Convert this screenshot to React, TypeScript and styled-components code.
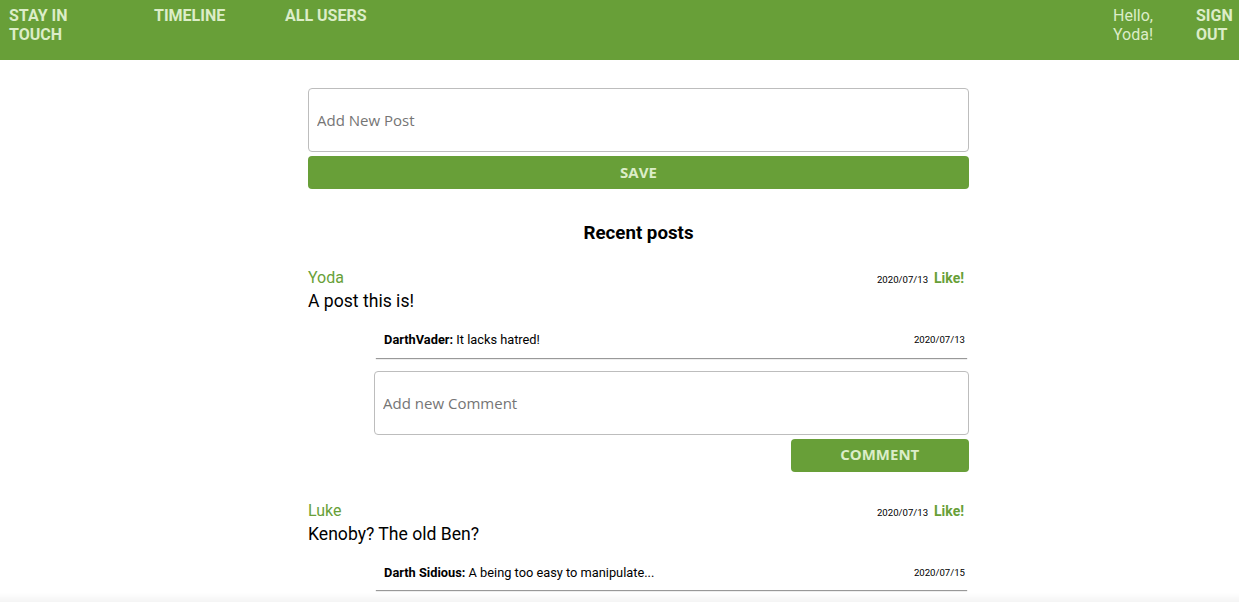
import styled, { createGlobalStyle } from "styled-components";

const GREEN = "#689f38";
const PALE = "#dcedc8";

const GlobalStyle = createGlobalStyle`
  body {
    margin: 0;
    background: #fff;
    font-family: Roboto, "Liberation Sans", sans-serif;
    color: #000;
  }
`;

const NavBar = styled.header`
  height: 60px;
  background-color: ${GREEN};
  display: grid;
  grid-template-columns: 145px 131px auto 1fr 83px 40px;
  padding: 6px 3px 0 9px;
  box-sizing: border-box;
  align-items: start;
`;

const NavLink = styled.a<{ $width?: number }>`
  display: block;
  width: ${(p) => (p.$width ? `${p.$width}px` : "auto")};
  color: ${PALE};
  font-size: 16px;
  font-weight: 700;
  text-transform: uppercase;
  text-decoration: none;
  cursor: pointer;
`;

const Greeting = styled.span`
  display: block;
  width: 50px;
  color: ${PALE};
  font-size: 16px;
`;

const Main = styled.main`
  width: 661px;
  margin: 28px 0 0 308px;
  padding-bottom: 40px;
`;

const Field = styled.input`
  display: block;
  width: 100%;
  height: 64px;
  box-sizing: border-box;
  padding: 0 8px;
  border: 1px solid #bdbdbd;
  border-radius: 4px;
  font-family: "Open Sans", "Noto Sans", sans-serif;
  font-size: 15px;
  color: #333;
  outline: none;

  &::placeholder {
    color: #757575;
  }
`;

const GreenButton = styled.button<{ $width?: string }>`
  display: block;
  width: ${(p) => p.$width || "100%"};
  height: 33px;
  margin: 4px 0 0 auto;
  padding: 0 0 2px;
  border: none;
  border-radius: 4px;
  background-color: ${GREEN};
  color: ${PALE};
  font-family: "Open Sans", "Noto Sans", sans-serif;
  font-size: 15px;
  font-weight: 700;
  text-transform: uppercase;
  cursor: pointer;
`;

const Title = styled.h3`
  margin: 33px 0 24px;
  font-size: 18.72px;
  font-weight: 700;
  text-align: center;
`;

const Post = styled.article`
  margin-bottom: 29px;
`;

const PostHead = styled.div`
  display: flex;
  align-items: baseline;
  justify-content: space-between;
`;

const Author = styled.span`
  color: ${GREEN};
  font-size: 16px;
`;

const Meta = styled.div`
  display: flex;
  align-items: baseline;
`;

const Stamp = styled.span`
  font-size: 9.6px;
  color: #000;
`;

const Like = styled.button`
  margin-left: 2px;
  padding: 0 5px 0 4px;
  border: none;
  background: none;
  color: ${GREEN};
  font-family: Roboto, sans-serif;
  font-size: 14px;
  font-weight: 700;
  cursor: pointer;
`;

const Body = styled.p`
  margin: 4px 0 0;
  font-size: 17.6px;
  line-height: 21.4px;
`;

const Comments = styled.div`
  width: 90%;
  margin: 12px 0 0 auto;
`;

const CommentRow = styled.div`
  display: flex;
  align-items: flex-start;
  justify-content: space-between;
  padding: 8px 3px 10px 9px;
  margin: 0 1px 0 1px;
  font-size: 12.8px;
  line-height: 15.2px;
  box-shadow: 0 2px 1px -1px rgba(0, 0, 0, 0.4);
`;

const CommentForm = styled.form`
  margin-top: 13px;
`;

const Fade = styled.div`
  position: fixed;
  left: 0;
  right: 0;
  bottom: 0;
  height: 9px;
  background: linear-gradient(to bottom, rgba(0, 0, 0, 0), rgba(0, 0, 0, 0.045));
  pointer-events: none;
`;

type Comment = { user: string; text: string; date: string };
type PostData = { author: string; text: string; date: string; comments: Comment[] };

const posts: PostData[] = [
  {
    author: "Yoda",
    text: "A post this is!",
    date: "2020/07/13",
    comments: [{ user: "DarthVader", text: "It lacks hatred!", date: "2020/07/13" }],
  },
  {
    author: "Luke",
    text: "Kenoby? The old Ben?",
    date: "2020/07/13",
    comments: [{ user: "Darth Sidious", text: "A being too easy to manipulate...", date: "2020/07/15" }],
  },
];

export default function App() {
  return (
    <>
      <GlobalStyle />
      <NavBar>
        <NavLink $width={70}>Stay in touch</NavLink>
        <NavLink>Timeline</NavLink>
        <NavLink>All users</NavLink>
        <span />
        <Greeting>Hello, Yoda!</Greeting>
        <NavLink $width={40}>Sign out</NavLink>
      </NavBar>

      <Main>
        <form onSubmit={(e) => e.preventDefault()}>
          <Field placeholder="Add New Post" />
          <GreenButton type="submit">Save</GreenButton>
        </form>

        <Title>Recent posts</Title>

        {posts.map((post) => (
          <Post key={post.author}>
            <PostHead>
              <Author>{post.author}</Author>
              <Meta>
                <Stamp>{post.date}</Stamp>
                <Like>Like!</Like>
              </Meta>
            </PostHead>
            <Body>{post.text}</Body>
            <Comments>
              {post.comments.map((c) => (
                <CommentRow key={c.user}>
                  <span>
                    <b>{c.user}:</b> {c.text}
                  </span>
                  <Stamp>{c.date}</Stamp>
                </CommentRow>
              ))}
              <CommentForm onSubmit={(e) => e.preventDefault()}>
                <Field placeholder="Add new Comment" />
                <GreenButton type="submit" $width="30%">
                  Comment
                </GreenButton>
              </CommentForm>
            </Comments>
          </Post>
        ))}
      </Main>
      <Fade />
    </>
  );
}
